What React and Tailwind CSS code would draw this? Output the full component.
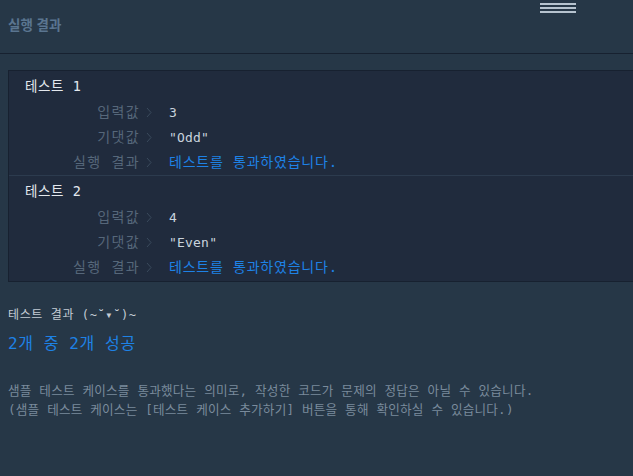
import React from "react";

const mono = { fontFamily: '"DejaVu Sans Mono", "Noto Sans CJK KR", monospace' };
const sans = { fontFamily: '"Noto Sans CJK KR", "Noto Sans", sans-serif' };

function Chevron() {
  return (
    <svg width="6" height="11" viewBox="0 0 6 11" className="ml-[6px] shrink-0">
      <path d="M1 1 L5 5.5 L1 10" fill="none" stroke="#3a4a5c" strokeWidth="1" />
    </svg>
  );
}

function Row({ label, value, blue }) {
  return (
    <div className="flex h-[25px] items-center">
      <div className="w-[131px] text-right text-[14px] tracking-[1.4px] text-[#56677a]">{label}</div>
      <Chevron />
      <div
        className={
          "ml-[17px] " +
          (blue
            ? "text-[14px] tracking-[0.8px] text-[#1e82e6]"
            : "text-[13px] tracking-[0.2px] text-[#c9d3dd]")
        }
      >
        {value}
      </div>
    </div>
  );
}

function TestBlock({ n, input, expected, last }) {
  return (
    <div className={"h-[105px] pt-[5px] " + (last ? "" : "border-b border-[#2c3b4e]")}>
      <div className="flex h-[20px] items-center pl-[16px] text-[13.5px] tracking-[0.6px] text-[#e3e8ee]">
        테스트 {n}
      </div>
      <div className="mt-[4px]">
        <Row label="입력값" value={input} />
        <Row label="기댓값" value={expected} />
        <Row label="실행 결과" value="테스트를 통과하였습니다." blue />
      </div>
    </div>
  );
}

export default function App() {
  return (
    <div className="relative h-[476px] w-[633px] overflow-hidden bg-[#263747]" style={mono}>
      <div className="absolute left-[540px] top-[3px] flex w-[36px] flex-col gap-[2px]">
        <div className="h-[2px] bg-[#b6c3cf]" />
        <div className="h-[2px] bg-[#b6c3cf]" />
        <div className="h-[2px] bg-[#b6c3cf]" />
      </div>
      <div className="flex h-[54px] items-start border-b border-[#172130] pl-[8px] pt-[14px]">
        <div className="text-[13.5px] font-bold leading-[20px] tracking-[0.2px] text-[#5a7590]" style={sans}>실행 결과</div>
      </div>
      <div className="ml-[8px] mt-[16px] w-[700px] border border-[#172130] bg-[#202b3d]">
        <TestBlock n={1} input="3" expected={'"Odd"'} />
        <TestBlock n={2} input="4" expected={'"Even"'} last />
      </div>
      <div className="pl-[8px]">
        <div className="mt-[23px] flex h-[20px] items-center text-[12px] tracking-[0.6px] text-[#c3ccd5]">
          테스트 결과 (~˘▾˘)~
        </div>
        <div className="mt-[7px] flex h-[24px] items-center text-[16px] tracking-[0.6px] text-[#1e82e6]">
          2개 중 2개 성공
        </div>
        <div className="mt-[26px] flex h-[18px] items-center text-[12.6px] tracking-[0.2px] text-[#7a8b9c]">
          샘플 테스트 케이스를 통과했다는 의미로, 작성한 코드가 문제의 정답은 아닐 수 있습니다.
        </div>
        <div className="mt-[1px] flex h-[18px] items-center text-[12.6px] tracking-[0.2px] text-[#7a8b9c]">
          (샘플 테스트 케이스는 [테스트 케이스 추가하기] 버튼을 통해 확인하실 수 있습니다.)
        </div>
      </div>
    </div>
  );
}
